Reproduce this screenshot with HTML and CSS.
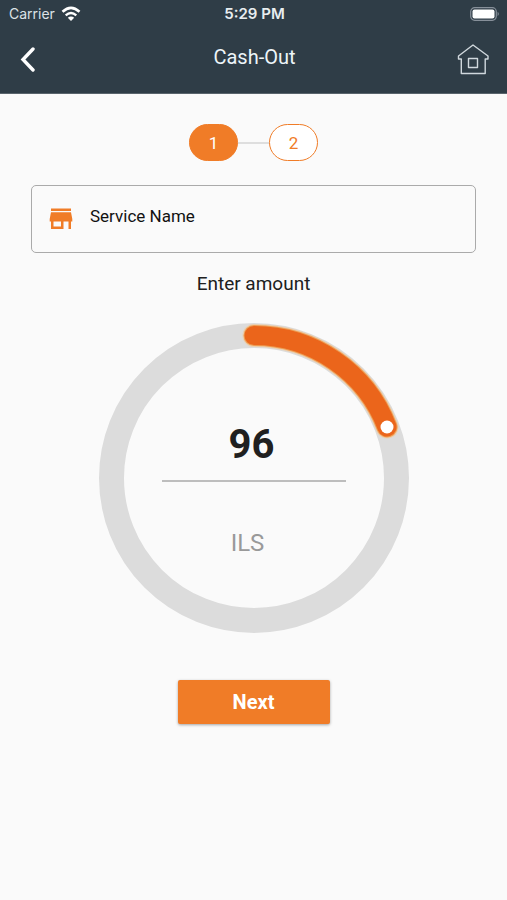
FILE: index.html
```html
<!DOCTYPE html>
<html lang="en">
<head>
<meta charset="utf-8">
<meta name="viewport" content="width=device-width, initial-scale=1">
<title>Cash-Out</title>
<link rel="stylesheet" href="styles.css">
</head>
<body>
<header class="header">
  <div class="status">
    <div class="carrier">
      <span>Carrier</span>
      <svg width="20" height="16" viewBox="0 0 20 16" fill="none" stroke="currentColor" stroke-width="2.600" aria-hidden="true">
        <path d="M1.500 5.800Q10-2 18.500 5.800"/>
        <path d="M4.700 9.300Q10 4.600 15.300 9.300" stroke-width="2.400"/>
        <path d="M10 15L6.800 11.700Q10 9.200 13.200 11.700Z" fill="currentColor" stroke="none"/>
      </svg>
    </div>
    <span class="clock">5:29 PM</span>
    <svg class="battery" width="30" height="14" viewBox="0 0 30 14" aria-hidden="true">
      <rect x=".7" y=".7" width="25.600" height="12.600" rx="4" fill="none" stroke="#87909a" stroke-width="1.200"/>
      <rect x="2.500" y="2.500" width="22" height="9" rx="2" fill="#fff"/>
      <path d="M27.600 4.800Q30 7 27.600 9.200Z" fill="#87909a"/>
    </svg>
  </div>
  <nav class="bar">
    <a href="#back" class="back" aria-label="Back">
      <svg width="16" height="26" viewBox="0 0 16 26" fill="none" stroke="currentColor" stroke-width="3.400" stroke-linecap="round" aria-hidden="true"><path d="M13 3L3 13.500L13 24"/></svg>
    </a>
    <h1 class="title">Cash-Out</h1>
    <a href="#home" class="home" aria-label="Home">
      <svg width="32" height="32" viewBox="0 0 32 32" fill="none" stroke="currentColor" stroke-width="1.400" stroke-linejoin="round" aria-hidden="true">
        <path d="M16 2L31 13V16H28.200V30.500H4.300V16H1.500V13Z"/>
        <rect x="11.500" y="15.500" width="9" height="9"/>
      </svg>
    </a>
  </nav>
</header>
<main class="main">
  <div class="steps">
    <span class="step step-active">1</span>
    <span class="link"></span>
    <span class="step">2</span>
  </div>
  <section class="service">
    <svg width="24" height="22" viewBox="0 0 24 22" fill="currentColor" aria-hidden="true">
      <path d="M2 .5H22V3H2ZM2 4.300H22L23.300 11V13.500H22V21H19.500V13.500H14.500V21H2V13.500H.7V11ZM4.500 13.500V18.500H12V13.500Z" fill-rule="evenodd"/>
    </svg>
    <span>Service Name</span>
  </section>
  <label class="prompt" for="amount">Enter amount</label>
  <div class="dial">
    <svg class="ring" viewBox="0 0 310 310" fill="none" aria-hidden="true">
      <circle cx="155" cy="155" r="142.500" stroke="#dcdcdc" stroke-width="25"/>
      <g stroke-linecap="round">
        <path d="M155 12.500A142.500 142.500 0 0 1 288 104" stroke="#f2c896" stroke-width="23" opacity=".65"/>
        <path d="M155 12.500A142.500 142.500 0 0 1 288 104" stroke="#ee9c52" stroke-width="21"/>
        <path d="M155 12.500A142.500 142.500 0 0 1 288 104" stroke="#eb651b" stroke-width="19"/>
      </g>
      <circle cx="288" cy="104" r="6.500" fill="#fff"/>
    </svg>
    <div class="value">
      <input id="amount" class="amount" type="text" inputmode="numeric" value="96">
      <span class="currency">ILS</span>
    </div>
  </div>
  <button class="next" type="button">Next</button>
</main>
</body>
</html>
```
FILE: styles.css
```css
* {
  box-sizing: border-box;
}

body {
  margin: 0;
  min-height: 100vh;
  background: #fafafa;
  color: #202020;
  font-family: Roboto, "Liberation Sans", sans-serif;
}

.header {
  height: 94px;
  background: #2f3d47;
  color: #fff;
  border-bottom: 1px solid #59646c;
}

.status,
.bar {
  display: grid;
  grid-template-columns: 1fr auto 1fr;
  align-items: center;
}

.status {
  height: 28px;
  padding: 0 7px 0 9px;
}

.carrier {
  display: flex;
  align-items: center;
  gap: 6px;
  font: 14px/20px Inter, sans-serif;
  color: #dce2e6;
}

.carrier svg {
  color: #fff;
}

.clock {
  font: 600 15px/20px Inter, sans-serif;
  color: #e8edf0;
}

.battery {
  justify-self: end;
}

.bar {
  height: 62px;
  padding: 0 18px 0 20px;
}

.bar a {
  display: flex;
  color: #fff;
}

.bar .home {
  justify-self: end;
  color: #d0d8dd;
}

.title {
  margin: 0;
  padding-bottom: 4px;
  font-size: 20px;
  line-height: 24px;
  font-weight: 400;
  color: #edf5f9;
}

.main {
  display: flex;
  flex-direction: column;
  align-items: center;
  padding: 30px 31px;
}

.steps {
  display: flex;
  align-items: center;
}

.step {
  width: 49px;
  height: 37px;
  border: 1px solid #f07c27;
  border-radius: 19px;
  background: #fff;
  color: #f07c27;
  text-align: center;
  font-size: 17px;
  line-height: 36px;
}

.step-active {
  background: #f07c27;
  color: #fff;
}

.link {
  width: 31px;
  height: 2px;
  background: #dedede;
}

.service {
  display: flex;
  align-items: center;
  gap: 17px;
  align-self: stretch;
  height: 68px;
  margin-top: 24px;
  padding: 0 17px;
  border: 1px solid #aaa;
  border-radius: 5px;
  color: #111;
  font-size: 17px;
  line-height: 24px;
}

.service svg {
  color: #f07c27;
}

.service span {
  padding-bottom: 6px;
}

.prompt {
  margin-top: 19px;
  font-size: 19px;
  line-height: 24px;
}

.dial {
  display: grid;
  width: 310px;
  max-width: 100%;
  margin-top: 27px;
}

.ring,
.value {
  grid-area: 1 / 1;
}

.ring {
  display: block;
  width: 100%;
}

.value {
  display: flex;
  flex-direction: column;
  align-items: center;
  padding-top: 86px;
}

.amount {
  width: 184px;
  height: 73px;
  padding: 0 4px 0 0;
  border: 0;
  border-bottom: 2px solid #bdbdbd;
  background: transparent;
  color: #202020;
  text-align: center;
  font: 700 40px/70px Roboto, sans-serif;
  outline: 0;
}

.currency {
  margin-top: 46px;
  padding-right: 12px;
  font-size: 24px;
  line-height: 30px;
  color: #999;
}

.next {
  width: 152px;
  height: 44px;
  margin-top: 47px;
  padding: 0;
  border: 0;
  border-radius: 2px;
  background: #f07c27;
  box-shadow: 0 1px 3px rgba(0, 0, 0, .35);
  color: #fff;
  font: 700 20px/44px Roboto, sans-serif;
}
```
